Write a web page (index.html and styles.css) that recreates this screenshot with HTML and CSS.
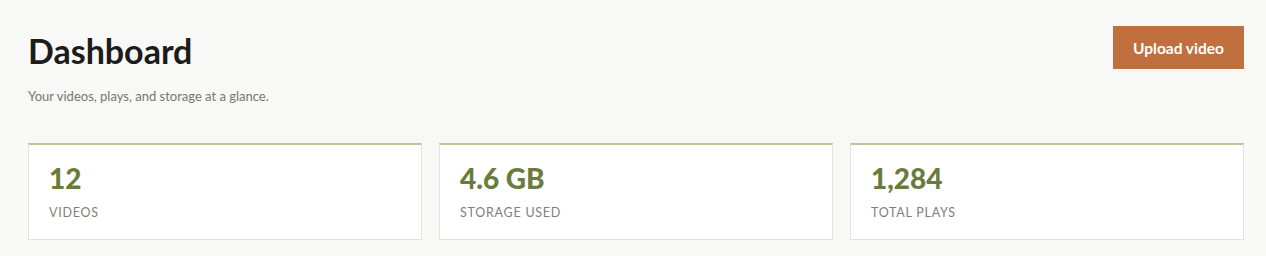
FILE: index.html
```html
<!DOCTYPE html>
<html lang="en">
<head>
    <meta charset="UTF-8">
    <meta name="viewport" content="width=device-width, initial-scale=1.0">
    <title>Dashboard</title>
    <link rel="stylesheet" href="styles.css">
</head>
<body>

<div class="page">
    <div class="header">
        <div>
            <h1>Dashboard</h1>
            <p class="subtitle">Your videos, plays, and storage at a glance.</p>
        </div>
        <button class="upload-button">Upload video</button>
    </div>

    <div class="stats">
        <div class="stat-card">
            <div class="stat-value">12</div>
            <div class="stat-label">Videos</div>
        </div>
        <div class="stat-card">
            <div class="stat-value">4.6 GB</div>
            <div class="stat-label">Storage used</div>
        </div>
        <div class="stat-card">
            <div class="stat-value">1,284</div>
            <div class="stat-label">Total plays</div>
        </div>
    </div>
</div>

</body>
</html>
```

FILE: styles.css
```css
body {
    margin: 0;
    font-family: Lato, "Open Sans", sans-serif;
    background-color: #f8f8f6;
    color: #1c1c1a;
}
.page {
    padding: 26px 22px 0 28px;
}
.header {
    display: flex;
    justify-content: space-between;
    align-items: flex-start;
}
h1 {
    margin: 6px 0 0;
    font-size: 34px;
    font-weight: 700;
    line-height: 38px;
    color: #1c1c1a;
}
.subtitle {
    margin: 18px 0 0;
    font-size: 13px;
    line-height: 16px;
    color: #77776f;
}
.upload-button {
    width: 131px;
    height: 43px;
    background-color: #c0703f;
    color: #fff;
    border: none;
    font-family: inherit;
    font-size: 15.5px;
    font-weight: 700;
    cursor: pointer;
}
.stats {
    display: grid;
    grid-template-columns: repeat(3, 1fr);
    gap: 17px;
    margin-top: 39px;
}
.stat-card {
    background: #fff;
    border: 1px solid #e3e3dd;
    border-top: 2px solid #bcc596;
    height: 97px;
    box-sizing: border-box;
    padding: 16px 20px 0;
}
.stat-value {
    font-size: 28px;
    font-weight: 900;
    line-height: 34px;
    color: #6a7b3c;
}
.stat-label {
    margin-top: 10px;
    font-size: 12.5px;
    letter-spacing: 0.06em;
    text-transform: uppercase;
    color: #808079;
}
```
